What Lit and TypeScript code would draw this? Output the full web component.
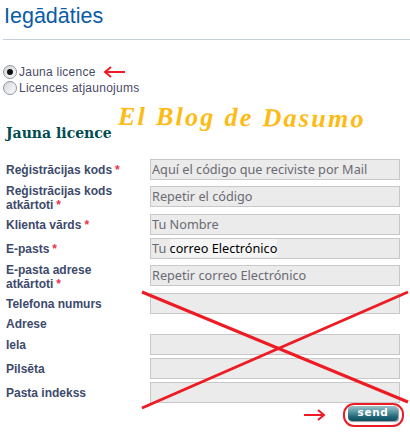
import { LitElement, html, css, svg } from "lit";
import { customElement } from "lit/decorators.js";

type Row = { lines: string[]; req?: boolean; ph?: string; h: string; noInput?: boolean; filled?: boolean };

const rows: Row[] = [
  { lines: ["Reģistrācijas kods"], req: true, ph: "Aquí el código que reciviste por Mail", h: "h27" },
  { lines: ["Reģistrācijas kods", "atkārtoti"], req: true, ph: "Repetir el código", h: "h28" },
  { lines: ["Klienta vārds"], req: true, ph: "Tu Nombre", h: "h24" },
  { lines: ["E-pasts"], req: true, filled: true, h: "h27" },
  { lines: ["E-pasta adrese", "atkārtoti"], req: true, ph: "Repetir correo Electrónico", h: "h28" },
  { lines: ["Telefona numurs"], h: "h24" },
  { lines: ["Adrese"], noInput: true, h: "h17" },
  { lines: ["Iela"], h: "h24" },
  { lines: ["Pilsēta"], h: "h24" },
  { lines: ["Pasta indekss"], h: "h24" },
];

@customElement("app-root")
export class AppRoot extends LitElement {
  static styles = css`
    :host { display: block; width: 410px; height: 432px; position: relative; overflow: hidden; background: #fff; font-family: "Liberation Sans", Arial, sans-serif; }
    .title { margin: 0; padding: 2px 0 0 4px; height: 37px; font-size: 21.5px; line-height: 28px; font-weight: 400; color: #0a5ca5; }
    .rule { height: 1px; margin-left: 3px; background: #c6ced8; }
    .radios { display: flex; flex-direction: column; gap: 2px; padding: 25px 0 0 3px; height: 47px; }
    .radio { display: flex; align-items: center; gap: 2px; height: 14px; font-size: 12px; letter-spacing: 0.25px; color: #4a4a68; }
    .dot { box-sizing: border-box; width: 14px; height: 14px; border: 1px solid #8e93a6; border-radius: 50%; background: linear-gradient(135deg, #d4d4da, #fff); display: flex; align-items: center; justify-content: center; }
    .dot i { width: 6px; height: 6px; border-radius: 50%; background: #111; }
    h2 { margin: 0; padding: 11px 0 0 6px; height: 36px; font-family: "DejaVu Serif", serif; font-size: 14px; line-height: 20px; font-weight: 700; color: #004c50; }
    .form { display: flex; flex-direction: column; padding: 0 0 0 6px; }
    .row { display: grid; grid-template-columns: 144px 250px; align-items: start; }
    .h27 { height: 27px; } .h28 { height: 28px; } .h24 { height: 24px; } .h17 { height: 17px; }
    .label { font-size: 12px; line-height: 14px; font-weight: 700; color: #3d4a6c; padding-top: 4px; }
    .label.two { padding-top: 0; margin-top: -2px; }
    .label.bare { padding-top: 0; }
    .line { display: flex; gap: 3px; white-space: nowrap; }
    .req { color: #e8334a; }
    .field { box-sizing: border-box; height: 21px; border: 1px solid #c8c8c8; background: #ebebeb; padding: 0 0 0 1px; font-family: "Noto Sans", "Open Sans", sans-serif; font-size: 12.7px; line-height: 19px; color: #6a6a72; white-space: nowrap; }
    .typed { color: #000; background: #f5f5f5; }
    .foot { display: flex; justify-content: flex-end; padding-right: 12px; }
    .send { width: 50px; height: 15px; border-radius: 4px; background: linear-gradient(#9cc2c9 0%, #5f9aa5 35%, #23697a 70%, #0e4f60 100%); color: #fff; font-size: 10.5px; line-height: 13px; font-weight: 700; letter-spacing: 0.6px; text-align: center; box-shadow: 1px 1px 1px #999; font-family: "DejaVu Sans", sans-serif; }
    .brand { position: absolute; left: 118px; top: 103px; font-family: "Liberation Serif", serif; font-style: italic; font-weight: 700; font-size: 26px; line-height: 30px; letter-spacing: 2.3px; color: #fdbb14; transform: rotate(0.6deg); white-space: nowrap; }
    .ink { position: absolute; left: 0; top: 0; width: 410px; height: 432px; pointer-events: none; }
  `;

  render() {
    return html`
      <h1 class="title">Iegādāties</h1>
      <div class="rule"></div>
      <div class="radios">
        <div class="radio"><span class="dot"><i></i></span>Jauna licence</div>
        <div class="radio"><span class="dot"></span>Licences atjaunojums</div>
      </div>
      <h2>Jauna licence</h2>
      <div class="form">
        ${rows.map(
          (r) => html`<div class="row ${r.h}">
            <div class="label ${r.lines.length > 1 ? "two" : ""} ${r.noInput ? "bare" : ""}">
              ${r.lines.map(
                (l, i) => html`<div class="line"><span>${l}</span>${r.req && i === r.lines.length - 1 ? html`<span class="req">*</span>` : ""}</div>`
              )}
            </div>
            ${r.noInput
              ? ""
              : html`<div class="field">${r.filled ? html`Tu <span class="typed">correo Electrónico</span>` : r.ph ?? ""}</div>`}
          </div>`
        )}
        <div class="foot"><div class="send">send</div></div>
      </div>
      <div class="brand">El Blog de Dasumo</div>
      <svg class="ink" viewBox="0 0 410 432" fill="none" stroke="#ed1c24">
        ${svg`
          <path d="M142 292L408 402M142 408L408 292" stroke-width="3" />
          <path d="M106 72H125M111 67L105 72L111 77" stroke-width="2" />
          <path d="M304 415H323M318 410L324 415L318 420" stroke-width="2" />
          <rect x="344" y="404" width="59" height="22" rx="10" stroke-width="2" />
        `}
      </svg>
    `;
  }
}
